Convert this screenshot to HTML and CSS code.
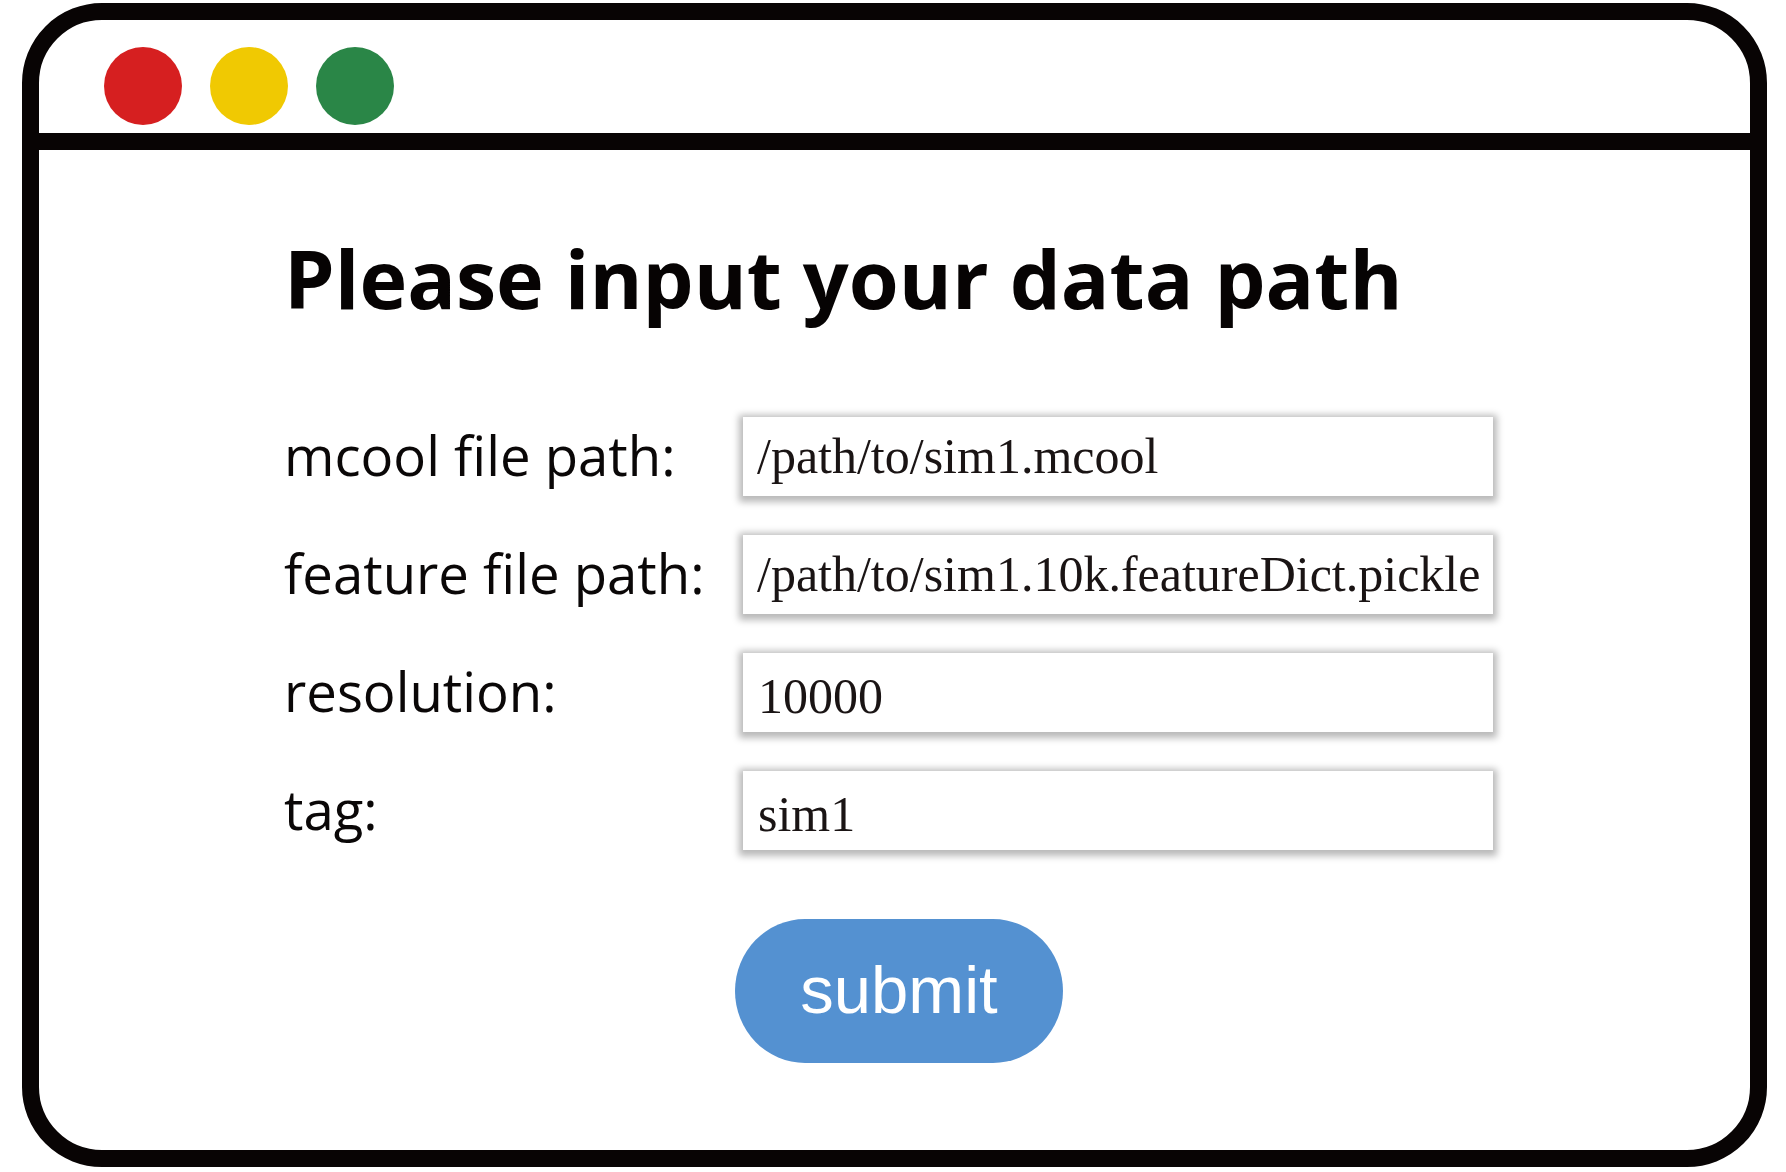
FILE: index.html
```html
<!DOCTYPE html>
<html lang="en">
<head>
<meta charset="utf-8">
<title>Please input your data path</title>
<link rel="stylesheet" href="styles.css">
</head>
<body>
<div class="frame">
  <div class="titlebar">
    <span class="dot dot-red"></span>
    <span class="dot dot-yellow"></span>
    <span class="dot dot-green"></span>
  </div>
  <div class="content">
    <h1 class="title">Please input your data path</h1>
    <form class="form">
      <label class="label" for="mcool">mcool file path:</label>
      <input class="field" id="mcool" type="text" value="/path/to/sim1.mcool">
      <label class="label" for="feature">feature file path:</label>
      <input class="field" id="feature" type="text" value="/path/to/sim1.10k.featureDict.pickle">
      <label class="label" for="resolution">resolution:</label>
      <input class="field field-low" id="resolution" type="text" value="10000">
      <label class="label" for="tag">tag:</label>
      <input class="field field-low" id="tag" type="text" value="sim1">
      <div class="actions">
        <button class="submit" type="button">submit</button>
      </div>
    </form>
  </div>
</div>
</body>
</html>
```

FILE: styles.css
```css
html, body {
  margin: 0;
  padding: 0;
  background: #ffffff;
}

body {
  width: 1786px;
  height: 1172px;
  overflow: hidden;
}

.frame {
  box-sizing: border-box;
  width: 1745px;
  height: 1164px;
  margin: 3px 0 0 22px;
  border: 17px solid #080404;
  border-radius: 80px;
  display: flex;
  flex-direction: column;
}

.titlebar {
  box-sizing: content-box;
  height: 86px;
  border-bottom: 17px solid #080404;
  display: flex;
  align-items: flex-start;
  gap: 28px;
  padding: 27px 0 0 65px;
  flex: none;
}

.dot {
  width: 78px;
  height: 78px;
  border-radius: 50%;
  display: block;
}

.dot-red { background: #d61f20; }
.dot-yellow { background: #f0c902; }
.dot-green { background: #2a8647; }

.content {
  padding: 80px 0 0 245px;
}

.title {
  margin: 0;
  font-family: "Open Sans", "Noto Sans", sans-serif;
  font-weight: 700;
  font-size: 80.8px;
  line-height: 96px;
  color: #060303;
}

.form {
  margin: 91px 0 0 0;
  display: grid;
  grid-template-columns: 459px 750px;
  grid-auto-rows: 79px;
  row-gap: 39px;
}

.label {
  font-family: "Open Sans", "Noto Sans", sans-serif;
  font-size: 54.5px;
  line-height: normal;
  color: #0a0707;
  white-space: nowrap;
  margin-top: 1px;
}

.field {
  box-sizing: border-box;
  width: 750px;
  height: 79px;
  margin: 0;
  border: none;
  outline: none;
  background: #ffffff;
  padding: 0 0 1px 14px;
  font-family: "Liberation Serif", "Times New Roman", serif;
  font-size: 50px;
  color: #1a1414;
  box-shadow: 0 2px 7px 4px rgba(0, 0, 0, 0.28);
}

.field-low {
  padding: 7px 0 0 15px;
}

.actions {
  grid-column: 2;
  margin: 30px 0 0 -8px;
  height: 144px;
}

.submit {
  width: 328px;
  height: 144px;
  border: none;
  border-radius: 70px / 72px;
  background: #5491d1;
  color: #ffffff;
  font-family: "Liberation Sans", Arial, sans-serif;
  font-size: 67px;
  line-height: 1;
  padding: 0 0 4px 0;
  display: flex;
  align-items: center;
  justify-content: center;
}
```
